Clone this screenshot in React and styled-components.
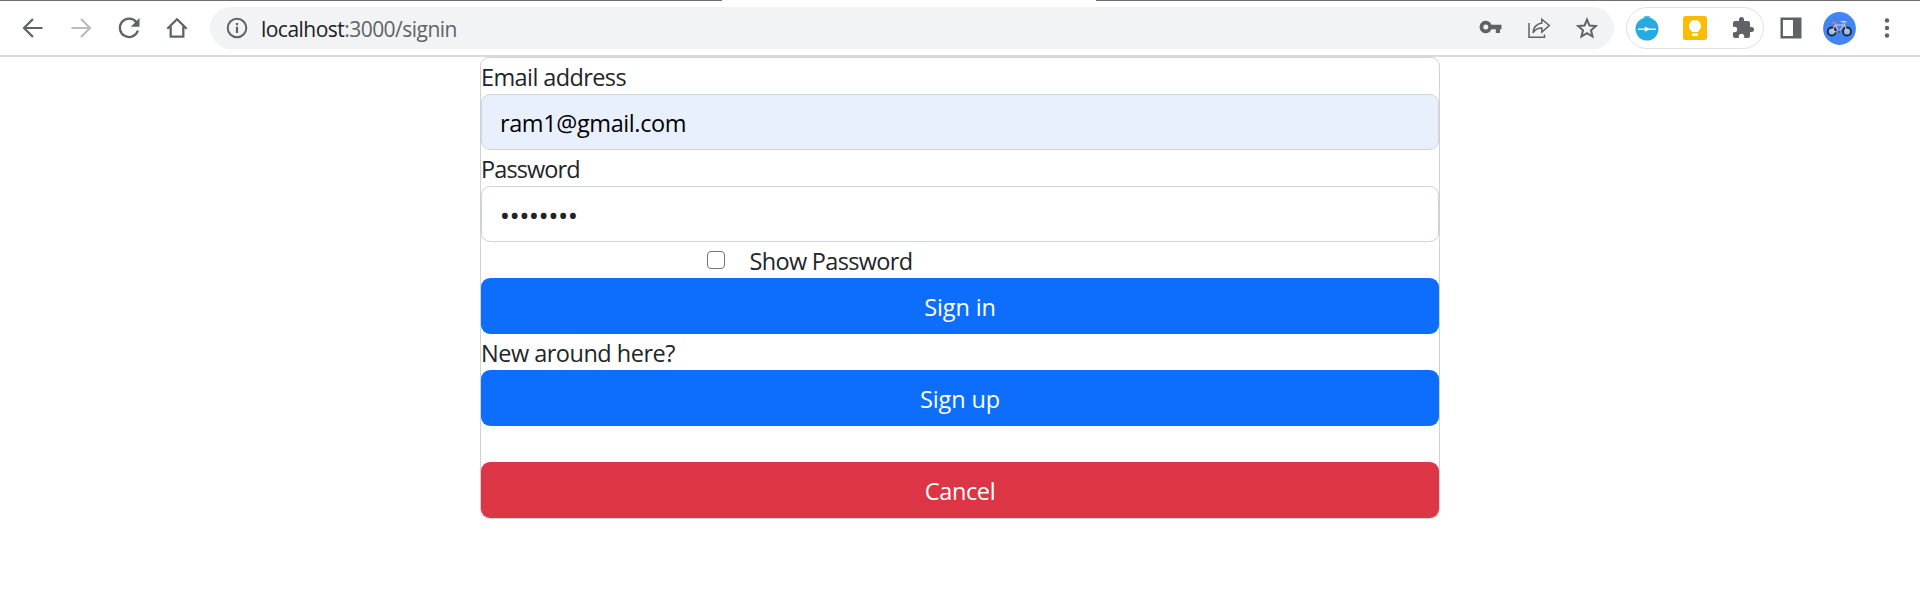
import React from "react";
import styled, { createGlobalStyle } from "styled-components";

const GlobalStyle = createGlobalStyle`
  * { box-sizing: border-box; }
  body {
    margin: 0;
    background: #fff;
    color: #212529;
    font-family: "Open Sans", "Noto Sans", sans-serif;
  }
`;

const TabEdge = styled.div`
  display: flex;
  justify-content: space-between;
  height: 1px;
`;

const EdgeLine = styled.div`
  width: ${(p) => p.$width}px;
  background: #6e6e72;
`;

const Toolbar = styled.header`
  display: flex;
  align-items: center;
  height: 56px;
  padding: 0 9px;
  border-bottom: 2px solid #dadada;
`;

const IconButton = styled.span`
  display: flex;
  flex: none;
  align-items: center;
  justify-content: center;
  width: 48px;
  height: 42px;
  color: ${(p) => (p.$muted ? "#babcbe" : "#5f6368")};

  svg { display: block; }
`;

const AddressBar = styled.div`
  display: flex;
  flex: 1;
  align-items: center;
  height: 42px;
  margin: 0 12px 0 9px;
  padding: 0 3px;
  border-radius: 21px;
  background: #f1f3f4;
`;

const Url = styled.span`
  flex: 1;
  padding-top: 1px;
  color: #5f6368;
  font-size: 21px;
  font-weight: 370;
  line-height: 28px;
  letter-spacing: -0.53px;
`;

const Host = styled.span`
  color: #202124;
`;

const Extensions = styled.div`
  display: flex;
  align-items: center;
  justify-content: center;
  width: 138px;
  height: 42px;
  margin-right: 3px;
  border: 1px solid #dfe1e5;
  border-radius: 21px;
`;

const Card = styled.main`
  width: 960px;
  margin: 0 auto;
  border: 1px solid #d0d3d6;
  border-radius: 9px;
  font-size: 23.5px;
  font-weight: 370;
  line-height: 36px;
`;

const Label = styled.div`
  height: 36px;
  padding-top: 1px;
  letter-spacing: ${(p) => p.$spacing}px;
`;

const Field = styled.div`
  height: 56px;
  padding: 10px 18px 8px;
  border: 1px solid #ced4da;
  border-radius: 9px;
  background: ${(p) => (p.$filled ? "#e8f0fe" : "#fff")};
  color: ${(p) => (p.$filled ? "#000" : "#212529")};
  letter-spacing: ${(p) => p.$spacing}px;
`;

const Mask = styled.span`
  font-family: "Noto Sans", sans-serif;
  font-size: 26px;
  font-weight: 400;
`;

const CheckRow = styled.label`
  display: flex;
  align-items: center;
  height: 36px;
  padding: 2px 0 0 226px;
  letter-spacing: -0.68px;
`;

const Checkbox = styled.span`
  width: 18px;
  height: 18px;
  margin: -2px 24.5px 0 0;
  border: 1.5px solid #767676;
  border-radius: 4px;
  background: #fff;
`;

const Button = styled.button`
  display: block;
  width: 100%;
  height: 56px;
  margin: ${(p) => p.$gap || 0}px 0 0;
  padding: 1px 0 0;
  border: 0;
  border-radius: 9px;
  background: ${(p) => (p.$danger ? "#dc3545" : "#0d6efd")};
  color: #fff;
  font: inherit;
  font-weight: 400;
  letter-spacing: ${(p) => p.$spacing}px;
`;

const Icon = ({ size = 24, children }) => (
  <svg width={size} height={size} viewBox={`0 0 ${size} ${size}`} fill="none">
    {children}
  </svg>
);

const BackIcon = () => (
  <Icon>
    <path d="M21.5 12H3.5M12 3L3 12l9 9" stroke="currentColor" strokeWidth="2.2" />
  </Icon>
);

const ForwardIcon = () => (
  <Icon>
    <path d="M2.5 12h18M12 3l9 9-9 9" stroke="currentColor" strokeWidth="2.2" />
  </Icon>
);

const ReloadIcon = () => (
  <Icon>
    <path d="M19.4 6.2A9.2 9.2 0 1 0 20.9 14.5" stroke="currentColor" strokeWidth="2.3" />
    <path d="M22.5 2v8.7h-8.7z" fill="currentColor" />
  </Icon>
);

const HomeIcon = () => (
  <Icon>
    <path d="M2.3 12.8L12 3.3l9.7 9.5M5.7 10.5V20.7h12.6V10.5" stroke="currentColor" strokeWidth="2.3" />
  </Icon>
);

const InfoIcon = () => (
  <Icon>
    <circle cx="12" cy="12" r="9.3" stroke="currentColor" strokeWidth="2" />
    <path d="M12 10.8v6.2M12 7v2.2" stroke="currentColor" strokeWidth="2.2" />
  </Icon>
);

const KeyIcon = () => (
  <Icon>
    <path
      fill="currentColor"
      fillRule="evenodd"
      d="M12.5 8.8A6.2 6.2 0 1 0 12.5 13.2H16.8V17h4.2v-3.8H22.5V8.8zM6.8 8.5a2.5 2.5 0 1 1 0 5 2.5 2.5 0 0 1 0-5z"
    />
  </Icon>
);

const ShareIcon = () => (
  <Icon>
    <path d="M2 7v14.3h15.5V18.5" stroke="currentColor" strokeWidth="1.5" />
    <path
      d="M14.8 3.2l7.5 6.3-7.5 6.5v-4C11 12 8.3 13.3 6 16.8 6.5 11.5 9.3 8 14.8 7z"
      stroke="currentColor"
      strokeWidth="1.5"
    />
  </Icon>
);

const StarIcon = () => (
  <Icon>
    <path
      d="M12 3.6l2.5 6 6.3.5-4.8 4.2 1.5 6.2L12 17.2l-5.5 3.3L8 14.3l-4.8-4.2 6.3-.5z"
      stroke="currentColor"
      strokeWidth="2"
    />
  </Icon>
);

const StopwatchIcon = () => (
  <Icon size={26}>
    <path d="M10.2 1.2h5.6v1.6h-1.7V5h-2.2V2.8h-1.7z" fill="#27aae1" />
    <circle cx="13" cy="14" r="11.5" fill="#27aae1" />
    <path d="M4 14.2h18" stroke="#fff" strokeWidth="1.3" />
    <path d="M10.8 11.6l5.7 2.6-5.7 2.6z" fill="#fff" />
  </Icon>
);

const KeepIcon = () => (
  <Icon>
    <rect width="24" height="24" rx="2.5" fill="#fbbc04" />
    <path d="M12 4a6 6 0 0 0-3.3 11v1h6.6v-1A6 6 0 0 0 12 4z" fill="#fff" />
    <path d="M9 17.3h6V20H9z" fill="#fff" />
  </Icon>
);

const PuzzleIcon = () => (
  <svg width="24" height="24" viewBox="0 0 24 24">
    <path
      fill="currentColor"
      d="M20.5 11H19V7c0-1.1-.9-2-2-2h-4V3.5a2.5 2.5 0 0 0-5 0V5H4c-1.1 0-2 .9-2 2v3.8h1.5a2.7 2.7 0 0 1 0 5.4H2V20c0 1.1.9 2 2 2h3.8v-1.5a2.7 2.7 0 0 1 5.4 0V22H17c1.1 0 2-.9 2-2v-4h1.5a2.5 2.5 0 0 0 0-5z"
    />
  </svg>
);

const PanelIcon = () => (
  <Icon>
    <path fill="currentColor" fillRule="evenodd" d="M1.5 1.5h21v21h-21zM4 4v16h10V4z" />
  </Icon>
);

const AvatarIcon = () => (
  <Icon size={34}>
    <circle cx="17.5" cy="17.5" r="16.4" fill="#4285f4" />
    <circle cx="9.8" cy="20.5" r="4" fill="#8fc0ee" stroke="#20242c" strokeWidth="1.8" />
    <circle cx="25" cy="20.5" r="4" fill="#8fc0ee" stroke="#20242c" strokeWidth="1.8" />
    <path d="M9.8 20.5l3.2-6.5h8.8l-5 6.8-3.3-6.8M16.8 20.8h-7M25 20.5l-3.7-10" stroke="#e4cdd6" strokeWidth="1" />
    <path d="M10 11.8h4.6" stroke="#e0746c" strokeWidth="1.8" />
    <path d="M18.8 10.6h5l1 1.2" stroke="#d9e2ee" strokeWidth="1" />
    <circle cx="16.8" cy="20.8" r="1.3" fill="#5b4b5e" />
  </Icon>
);

const MenuIcon = () => (
  <Icon>
    <circle cx="12" cy="4.5" r="2.2" fill="currentColor" />
    <circle cx="12" cy="12" r="2.2" fill="currentColor" />
    <circle cx="12" cy="19.5" r="2.2" fill="currentColor" />
  </Icon>
);

export default function App() {
  return (
    <>
      <GlobalStyle />
      <TabEdge>
        <EdgeLine $width={722} />
        <EdgeLine $width={824} />
      </TabEdge>
      <Toolbar>
        <IconButton><BackIcon /></IconButton>
        <IconButton $muted><ForwardIcon /></IconButton>
        <IconButton><ReloadIcon /></IconButton>
        <IconButton><HomeIcon /></IconButton>
        <AddressBar>
          <IconButton><InfoIcon /></IconButton>
          <Url><Host>localhost</Host>:3000/signin</Url>
          <IconButton><KeyIcon /></IconButton>
          <IconButton><ShareIcon /></IconButton>
          <IconButton><StarIcon /></IconButton>
        </AddressBar>
        <Extensions>
          <IconButton><StopwatchIcon /></IconButton>
          <IconButton><KeepIcon /></IconButton>
          <IconButton><PuzzleIcon /></IconButton>
        </Extensions>
        <IconButton><PanelIcon /></IconButton>
        <IconButton><AvatarIcon /></IconButton>
        <IconButton><MenuIcon /></IconButton>
      </Toolbar>
      <Card>
        <Label $spacing={-0.6}>Email address</Label>
        <Field $filled $spacing={-0.4}>ram1@gmail.com</Field>
        <Label $spacing={-0.9}>Password</Label>
        <Field $spacing={-0.07}><Mask>••••••••</Mask></Field>
        <CheckRow>
          <Checkbox />
          Show Password
        </CheckRow>
        <Button $spacing={-0.1}>Sign in</Button>
        <Label $spacing={-0.5}>New around here?</Label>
        <Button $spacing={-0.1}>Sign up</Button>
        <Button $danger $gap={36} $spacing={-0.35}>Cancel</Button>
      </Card>
    </>
  );
}
